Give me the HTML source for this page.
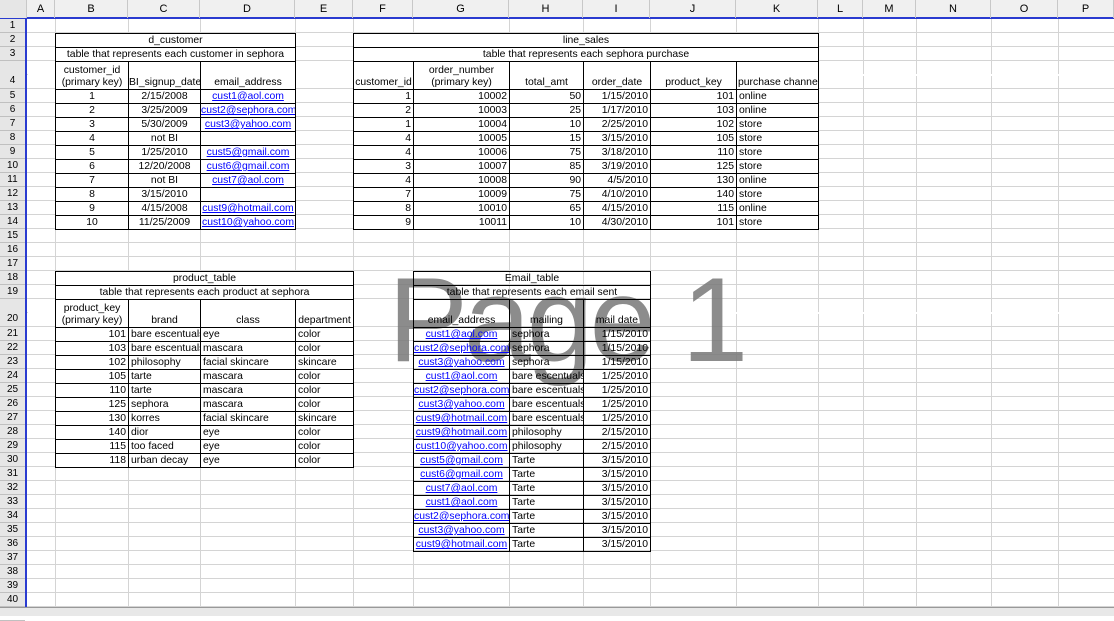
<!DOCTYPE html>
<html><head><meta charset="utf-8"><style>
*{margin:0;padding:0;box-sizing:border-box}
body{width:1114px;height:616px;overflow:hidden;background:#fff;font-family:"Liberation Sans",Arial,sans-serif;font-size:11px;color:#000;position:relative}
.grid{position:absolute;left:27px;top:19px;right:0;bottom:0;background:repeating-linear-gradient(to bottom,#fff 0,#fff 13px,#d4d4d4 13px,#d4d4d4 14px)}
.v{position:absolute;top:19px;bottom:0;width:1px;background:#d4d4d4}
.colh{position:absolute;top:0;height:19px;left:0;right:0;background:#f0f0f0;border-bottom:2px solid #2a3bd0}
.ch{position:absolute;top:0;height:18px;line-height:18px;text-align:center;border-right:1px solid #c8c8c8;font-size:11px}
.rowh{position:absolute;left:0;top:19px;width:27px;bottom:0;background:#e6e6e6;border-right:2px solid #2a3bd0}
.rh{position:absolute;left:0;width:25px;text-align:center;border-bottom:1px solid #c0c0c0;font-size:10px;line-height:13px}
table{position:absolute;border-collapse:collapse;table-layout:fixed;background:#fff}
td{border:1px solid #000;padding:0 2px;white-space:nowrap;overflow:hidden;vertical-align:bottom;line-height:12px;height:14px;font-size:10.4px}
td.c{text-align:center}td.r{text-align:right}
tr.h td{height:28px;text-align:center}
a{color:#00f;text-decoration:underline}
.wm{position:absolute;left:388px;top:250px;font-size:120px;letter-spacing:-4px;color:rgba(120,120,120,.85);line-height:140px;white-space:nowrap}
.tabs{position:absolute;top:607px;left:0;right:0;height:9px;background:#e8e8e8;border-top:1px solid #999}
</style></head><body>
<div class="grid"></div>
<div class="v" style="left:55px"></div><div class="v" style="left:128px"></div><div class="v" style="left:200px"></div><div class="v" style="left:295px"></div><div class="v" style="left:353px"></div><div class="v" style="left:413px"></div><div class="v" style="left:509px"></div><div class="v" style="left:583px"></div><div class="v" style="left:650px"></div><div class="v" style="left:736px"></div><div class="v" style="left:818px"></div><div class="v" style="left:863px"></div><div class="v" style="left:916px"></div><div class="v" style="left:991px"></div><div class="v" style="left:1058px"></div>
<div style="position:absolute;left:28px;right:0;top:74px;height:2px;background:#fff"></div>
<div style="position:absolute;left:28px;right:0;top:312px;height:2px;background:#fff"></div>

<div class="wm">Page 1</div>

<div class="colh">
<div class="ch" style="left:0;width:27px;background:#e6e6e6"></div>
<div class="ch" style="left:27px;width:28px">A</div><div class="ch" style="left:55px;width:73px">B</div><div class="ch" style="left:128px;width:72px">C</div><div class="ch" style="left:200px;width:95px">D</div><div class="ch" style="left:295px;width:58px">E</div><div class="ch" style="left:353px;width:60px">F</div><div class="ch" style="left:413px;width:96px">G</div><div class="ch" style="left:509px;width:74px">H</div><div class="ch" style="left:583px;width:67px">I</div><div class="ch" style="left:650px;width:86px">J</div><div class="ch" style="left:736px;width:82px">K</div><div class="ch" style="left:818px;width:45px">L</div><div class="ch" style="left:863px;width:53px">M</div><div class="ch" style="left:916px;width:75px">N</div><div class="ch" style="left:991px;width:67px">O</div><div class="ch" style="left:1058px;width:56px">P</div>
</div>
<div class="rowh">
<div class="rh" style="top:0;height:14px">1</div><div class="rh" style="top:14px;height:14px">2</div><div class="rh" style="top:28px;height:14px">3</div><div class="rh" style="top:42px;height:28px;line-height:40px">4</div>
<div class="rh" style="top:70px;height:14px">5</div><div class="rh" style="top:84px;height:14px">6</div><div class="rh" style="top:98px;height:14px">7</div><div class="rh" style="top:112px;height:14px">8</div><div class="rh" style="top:126px;height:14px">9</div><div class="rh" style="top:140px;height:14px">10</div><div class="rh" style="top:154px;height:14px">11</div><div class="rh" style="top:168px;height:14px">12</div><div class="rh" style="top:182px;height:14px">13</div><div class="rh" style="top:196px;height:14px">14</div><div class="rh" style="top:210px;height:14px">15</div><div class="rh" style="top:224px;height:14px">16</div><div class="rh" style="top:238px;height:14px">17</div><div class="rh" style="top:252px;height:14px">18</div><div class="rh" style="top:266px;height:14px">19</div><div class="rh" style="top:280px;height:28px;line-height:40px">20</div>
<div class="rh" style="top:308px;height:14px">21</div><div class="rh" style="top:322px;height:14px">22</div><div class="rh" style="top:336px;height:14px">23</div><div class="rh" style="top:350px;height:14px">24</div><div class="rh" style="top:364px;height:14px">25</div><div class="rh" style="top:378px;height:14px">26</div><div class="rh" style="top:392px;height:14px">27</div><div class="rh" style="top:406px;height:14px">28</div><div class="rh" style="top:420px;height:14px">29</div><div class="rh" style="top:434px;height:14px">30</div><div class="rh" style="top:448px;height:14px">31</div><div class="rh" style="top:462px;height:14px">32</div><div class="rh" style="top:476px;height:14px">33</div><div class="rh" style="top:490px;height:14px">34</div><div class="rh" style="top:504px;height:14px">35</div><div class="rh" style="top:518px;height:14px">36</div><div class="rh" style="top:532px;height:14px">37</div><div class="rh" style="top:546px;height:14px">38</div><div class="rh" style="top:560px;height:14px">39</div><div class="rh" style="top:574px;height:14px">40</div><div class="rh" style="top:588px;height:14px">41</div>
</div>

<table style="left:55px;top:33px;width:240px">
<col style="width:73px"><col style="width:72px"><col style="width:95px">
<tr><td colspan="3" class="c">d_customer</td></tr>
<tr><td colspan="3" class="c">table that represents each customer in sephora</td></tr>
<tr class="h"><td>customer_id<br>(primary key)</td><td style="text-align:left;padding:0">BI_signup_date</td><td>email_address</td></tr>
<tr><td class="c">1</td><td class="c">2/15/2008</td><td class="c"><a>cust1@aol.com</a></td></tr>
<tr><td class="c">2</td><td class="c">3/25/2009</td><td class="c" style="padding:0"><a>cust2@sephora.com</a></td></tr>
<tr><td class="c">3</td><td class="c">5/30/2009</td><td class="c"><a>cust3@yahoo.com</a></td></tr>
<tr><td class="c">4</td><td class="c">not BI</td><td></td></tr>
<tr><td class="c">5</td><td class="c">1/25/2010</td><td class="c"><a>cust5@gmail.com</a></td></tr>
<tr><td class="c">6</td><td class="c">12/20/2008</td><td class="c"><a>cust6@gmail.com</a></td></tr>
<tr><td class="c">7</td><td class="c">not BI</td><td class="c"><a>cust7@aol.com</a></td></tr>
<tr><td class="c">8</td><td class="c">3/15/2010</td><td></td></tr>
<tr><td class="c">9</td><td class="c">4/15/2008</td><td class="c" style="padding:0"><a>cust9@hotmail.com</a></td></tr>
<tr><td class="c">10</td><td class="c">11/25/2009</td><td class="c" style="padding:0"><a>cust10@yahoo.com</a></td></tr>
</table>

<table style="left:353px;top:33px;width:465px">
<col style="width:60px"><col style="width:96px"><col style="width:74px"><col style="width:67px"><col style="width:86px"><col style="width:82px">
<tr><td colspan="6" class="c">line_sales</td></tr>
<tr><td colspan="6" class="c">table that represents each sephora purchase</td></tr>
<tr class="h"><td style="padding:0">customer_id</td><td>order_number<br>(primary key)</td><td>total_amt</td><td>order_date</td><td>product_key</td><td style="text-align:left;padding:0 0 0 1px">purchase channel</td></tr>
<tr><td class="r">1</td><td class="r">10002</td><td class="r">50</td><td class="r">1/15/2010</td><td class="r">101</td><td>online</td></tr>
<tr><td class="r">2</td><td class="r">10003</td><td class="r">25</td><td class="r">1/17/2010</td><td class="r">103</td><td>online</td></tr>
<tr><td class="r">1</td><td class="r">10004</td><td class="r">10</td><td class="r">2/25/2010</td><td class="r">102</td><td>store</td></tr>
<tr><td class="r">4</td><td class="r">10005</td><td class="r">15</td><td class="r">3/15/2010</td><td class="r">105</td><td>store</td></tr>
<tr><td class="r">4</td><td class="r">10006</td><td class="r">75</td><td class="r">3/18/2010</td><td class="r">110</td><td>store</td></tr>
<tr><td class="r">3</td><td class="r">10007</td><td class="r">85</td><td class="r">3/19/2010</td><td class="r">125</td><td>store</td></tr>
<tr><td class="r">4</td><td class="r">10008</td><td class="r">90</td><td class="r">4/5/2010</td><td class="r">130</td><td>online</td></tr>
<tr><td class="r">7</td><td class="r">10009</td><td class="r">75</td><td class="r">4/10/2010</td><td class="r">140</td><td>store</td></tr>
<tr><td class="r">8</td><td class="r">10010</td><td class="r">65</td><td class="r">4/15/2010</td><td class="r">115</td><td>online</td></tr>
<tr><td class="r">9</td><td class="r">10011</td><td class="r">10</td><td class="r">4/30/2010</td><td class="r">101</td><td>store</td></tr>
</table>

<table style="left:55px;top:271px;width:298px">
<col style="width:73px"><col style="width:72px"><col style="width:95px"><col style="width:58px">
<tr><td colspan="4" class="c">product_table</td></tr>
<tr><td colspan="4" class="c">table that represents each product at sephora</td></tr>
<tr class="h"><td>product_key<br>(primary key)</td><td>brand</td><td>class</td><td style="padding:0">department</td></tr>
<tr><td class="r">101</td><td>bare escentuals</td><td>eye</td><td>color</td></tr>
<tr><td class="r">103</td><td>bare escentuals</td><td>mascara</td><td>color</td></tr>
<tr><td class="r">102</td><td>philosophy</td><td>facial skincare</td><td>skincare</td></tr>
<tr><td class="r">105</td><td>tarte</td><td>mascara</td><td>color</td></tr>
<tr><td class="r">110</td><td>tarte</td><td>mascara</td><td>color</td></tr>
<tr><td class="r">125</td><td>sephora</td><td>mascara</td><td>color</td></tr>
<tr><td class="r">130</td><td>korres</td><td>facial skincare</td><td>skincare</td></tr>
<tr><td class="r">140</td><td>dior</td><td>eye</td><td>color</td></tr>
<tr><td class="r">115</td><td>too faced</td><td>eye</td><td>color</td></tr>
<tr><td class="r">118</td><td>urban decay</td><td>eye</td><td>color</td></tr>
</table>

<table style="left:413px;top:271px;width:237px;background:transparent">
<col style="width:96px"><col style="width:74px"><col style="width:67px">
<tr><td colspan="3" class="c">Email_table</td></tr>
<tr><td colspan="3" class="c">table that represents each email sent</td></tr>
<tr class="h"><td>email_address</td><td>mailing</td><td>mail date</td></tr>
<tr><td class="c" style="padding:0"><a>cust1@aol.com</a></td><td>sephora</td><td class="r">1/15/2010</td></tr>
<tr><td class="c" style="padding:0"><a>cust2@sephora.com</a></td><td>sephora</td><td class="r">1/15/2010</td></tr>
<tr><td class="c" style="padding:0"><a>cust3@yahoo.com</a></td><td>sephora</td><td class="r">1/15/2010</td></tr>
<tr><td class="c" style="padding:0"><a>cust1@aol.com</a></td><td>bare escentuals</td><td class="r">1/25/2010</td></tr>
<tr><td class="c" style="padding:0"><a>cust2@sephora.com</a></td><td>bare escentuals</td><td class="r">1/25/2010</td></tr>
<tr><td class="c" style="padding:0"><a>cust3@yahoo.com</a></td><td>bare escentuals</td><td class="r">1/25/2010</td></tr>
<tr><td class="c" style="padding:0"><a>cust9@hotmail.com</a></td><td>bare escentuals</td><td class="r">1/25/2010</td></tr>
<tr><td class="c" style="padding:0"><a>cust9@hotmail.com</a></td><td>philosophy</td><td class="r">2/15/2010</td></tr>
<tr><td class="c" style="padding:0"><a>cust10@yahoo.com</a></td><td>philosophy</td><td class="r">2/15/2010</td></tr>
<tr><td class="c" style="padding:0"><a>cust5@gmail.com</a></td><td>Tarte</td><td class="r">3/15/2010</td></tr>
<tr><td class="c" style="padding:0"><a>cust6@gmail.com</a></td><td>Tarte</td><td class="r">3/15/2010</td></tr>
<tr><td class="c" style="padding:0"><a>cust7@aol.com</a></td><td>Tarte</td><td class="r">3/15/2010</td></tr>
<tr><td class="c" style="padding:0"><a>cust1@aol.com</a></td><td>Tarte</td><td class="r">3/15/2010</td></tr>
<tr><td class="c" style="padding:0"><a>cust2@sephora.com</a></td><td>Tarte</td><td class="r">3/15/2010</td></tr>
<tr><td class="c" style="padding:0"><a>cust3@yahoo.com</a></td><td>Tarte</td><td class="r">3/15/2010</td></tr>
<tr><td class="c" style="padding:0"><a>cust9@hotmail.com</a></td><td>Tarte</td><td class="r">3/15/2010</td></tr>
</table>

<div class="tabs"></div>
</body></html>
